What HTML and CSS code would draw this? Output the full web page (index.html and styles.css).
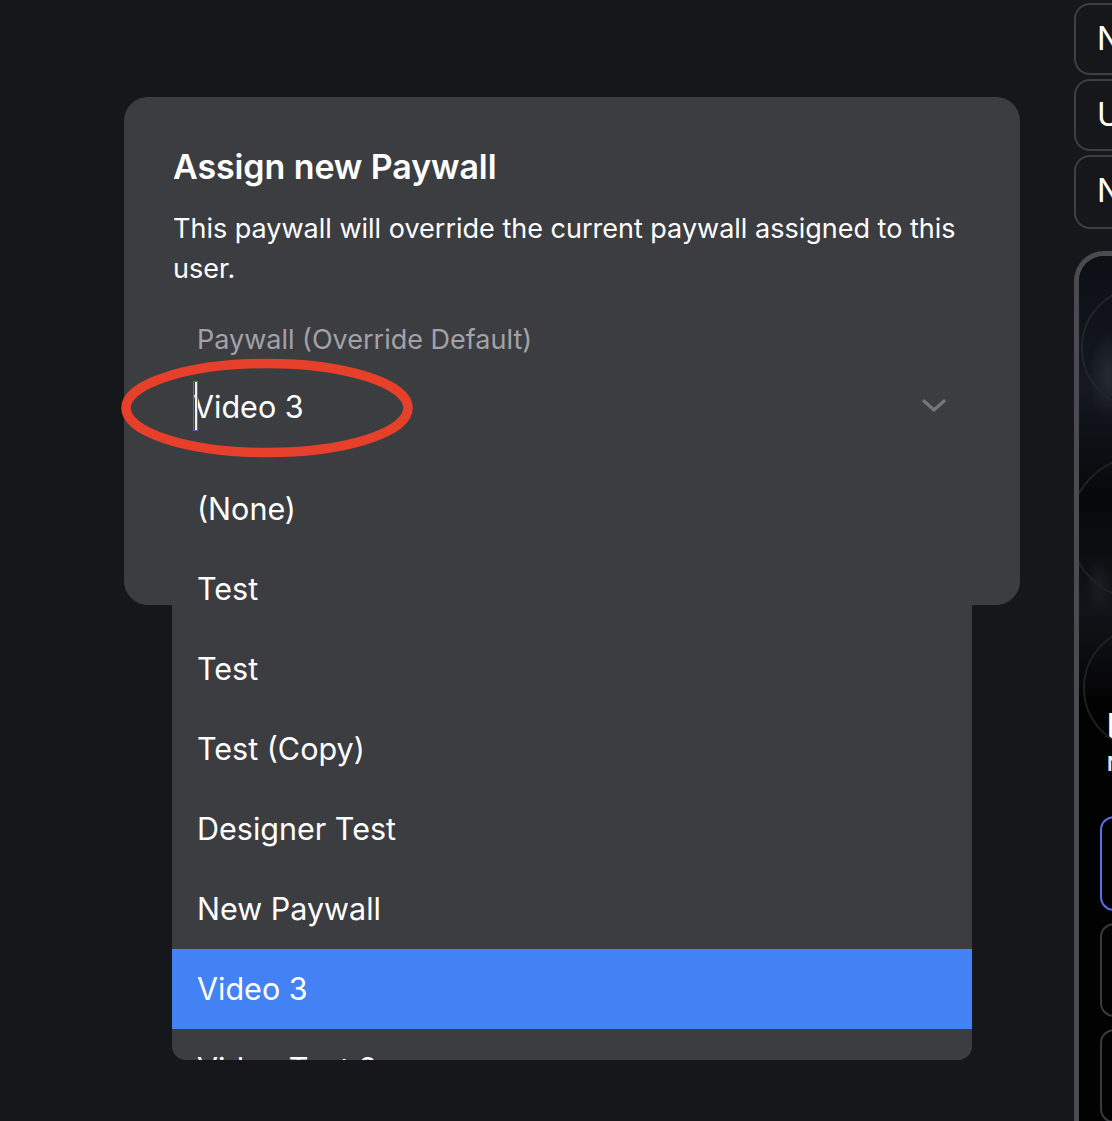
FILE: index.html
```html
<!DOCTYPE html>
<html>
<head>
<meta charset="utf-8">
<link rel="stylesheet" href="styles.css">
</head>
<body>
<div class="page">
  <aside class="side">
    <div class="side-btn">N</div>
    <div class="side-btn">U</div>
    <div class="side-btn">N</div>
    <div class="preview">
      <div class="art">
        <div class="ring ring-a"></div>
        <div class="ring ring-b"></div>
        <div class="ring ring-c"></div>
      </div>
      <div class="preview-body">
        <div class="p-title">I</div>
        <div class="p-sub">N</div>
        <div class="p-opt p-opt-active"></div>
        <div class="p-opt"></div>
        <div class="p-opt"></div>
      </div>
    </div>
  </aside>
</div>

<div class="modal">
  <h1 class="modal-title">Assign new Paywall</h1>
  <p class="modal-text">This paywall will override the current paywall assigned to this user.</p>
  <div class="field-label">Paywall (Override Default)</div>
  <div class="select">
    <span class="caret"></span>
    <span class="select-value">Video 3</span>
    <svg class="chevron" width="26" height="16" viewBox="0 0 26 16"><path d="M3 3 L13 12 L23 3" fill="none" stroke="#75767b" stroke-width="3.2" stroke-linecap="round" stroke-linejoin="round"/></svg>
  </div>
</div>

<svg class="annotation" width="320" height="120" viewBox="0 0 320 120">
  <ellipse cx="147" cy="50" rx="141" ry="44.5" fill="none" stroke="#e6402a" stroke-width="9.5"/>
</svg>

<ul class="dropdown">
  <li class="opt">(None)</li>
  <li class="opt">Test</li>
  <li class="opt">Test</li>
  <li class="opt">Test (Copy)</li>
  <li class="opt">Designer Test</li>
  <li class="opt">New Paywall</li>
  <li class="opt opt-selected">Video 3</li>
  <li class="opt">Video Test 2</li>
</ul>
</body>
</html>
```

FILE: styles.css
```css
html, body {
  margin: 0;
  padding: 0;
  background: #16171b;
  height: 100%;
  overflow: hidden;
}
body {
  font-family: Inter, "Noto Sans", "Liberation Sans", sans-serif;
  color: #fff;
  position: relative;
  width: 1112px;
  height: 1121px;
}
.page {
  display: flex;
  justify-content: flex-end;
  height: 100%;
}
.side {
  width: 38px;
  padding-top: 3px;
  display: flex;
  flex-direction: column;
  gap: 4px;
}
.side-btn {
  box-sizing: border-box;
  height: 72px;
  width: 80px;
  border: 2px solid #3e3f44;
  border-right: none;
  border-radius: 16px 0 0 16px;
  padding-left: 21px;
  font-size: 32px;
  line-height: 68px;
  font-weight: 400;
  color: #fff;
}
.side-btn:nth-child(3) { height: 74px; }
.preview {
  margin-top: 18px;
  flex: 1;
  box-sizing: border-box;
  border: 5px solid #4a4b50;
  border-right: none;
  border-bottom: none;
  border-radius: 30px 0 0 0;
  background: #020203;
  overflow: hidden;
  position: relative;
}
.art {
  height: 440px;
  background:
    radial-gradient(ellipse 30px 60px at 30px 120px, #262a32 0%, transparent 70%),
    radial-gradient(ellipse 20px 40px at 20px 330px, #1a1d23 0%, transparent 70%),
    linear-gradient(180deg, #0c0f14 0%, #141820 30%, #07080b 55%, #121419 80%, #050506 100%);
  position: relative;
}
.ring {
  position: absolute;
  border: 2px solid #22252b;
  border-radius: 50%;
}
.ring-a { left: 2px; top: 30px; width: 120px; height: 120px; }
.ring-b { left: -10px; top: 200px; width: 140px; height: 140px; border-color: #1d2025; }
.ring-c { left: 4px; top: 370px; width: 120px; height: 120px; border-color: #1d2025; }
.preview-body {
  padding-left: 28px;
}
.p-title {
  font-size: 34px;
  font-weight: 700;
  line-height: 40px;
  margin-top: 10px;
}
.p-sub {
  font-size: 20px;
  font-weight: 600;
  line-height: 24px;
  margin-top: 6px;
  color: #e6e6e6;
}
.p-opt {
  box-sizing: border-box;
  height: 94px;
  width: 60px;
  margin-top: 12px;
  margin-left: -7px;
  border: 2px solid #3a3b3f;
  border-right: none;
  border-radius: 14px 0 0 14px;
}
.p-opt-active {
  margin-top: 40px;
  border-color: #5a6ff0;
  height: 95px;
}

.modal {
  position: absolute;
  left: 124px;
  top: 97px;
  width: 896px;
  height: 508px;
  box-sizing: border-box;
  background: #3c3d41;
  border-radius: 24px;
  padding: 48px 40px 0 49px;
}
.modal-title {
  margin: 0;
  font-size: 34px;
  font-weight: 600;
  line-height: 44px;
  letter-spacing: -0.1px;
}
.modal-text {
  margin: 20px 0 0 0;
  font-size: 27px;
  line-height: 40px;
  font-weight: 400;
  color: #fff;
  width: 800px;
}
.field-label {
  margin-top: 33px;
  padding-left: 24px;
  font-size: 27px;
  line-height: 36px;
  color: #a2a2a7;
}
.select {
  margin-top: 18px;
  height: 60px;
  width: 798px;
  box-sizing: border-box;
  display: flex;
  align-items: center;
  padding-left: 20px;
  padding-right: 24px;
  position: relative;
}
.select-value {
  font-size: 30.5px;
  flex: 1;
}
.caret {
  position: absolute;
  left: 20px;
  top: 5px;
  width: 3px;
  height: 48px;
  border: 1px solid #3a6fe6;
  background: linear-gradient(90deg, transparent 0 1px, #f0f0f0 1px 3px);
}
.chevron {
  display: block;
}

.annotation {
  position: absolute;
  left: 120px;
  top: 358px;
}

.dropdown {
  position: absolute;
  left: 172px;
  top: 469px;
  width: 800px;
  height: 591px;
  margin: 0;
  padding: 0;
  list-style: none;
  background: #3c3d41;
  border-radius: 0 0 14px 14px;
  overflow: hidden;
}
.opt {
  height: 80px;
  line-height: 80px;
  padding-left: 25px;
  font-size: 30.5px;
  color: #fff;
}
.opt-selected {
  background: #4382f5;
}
```
